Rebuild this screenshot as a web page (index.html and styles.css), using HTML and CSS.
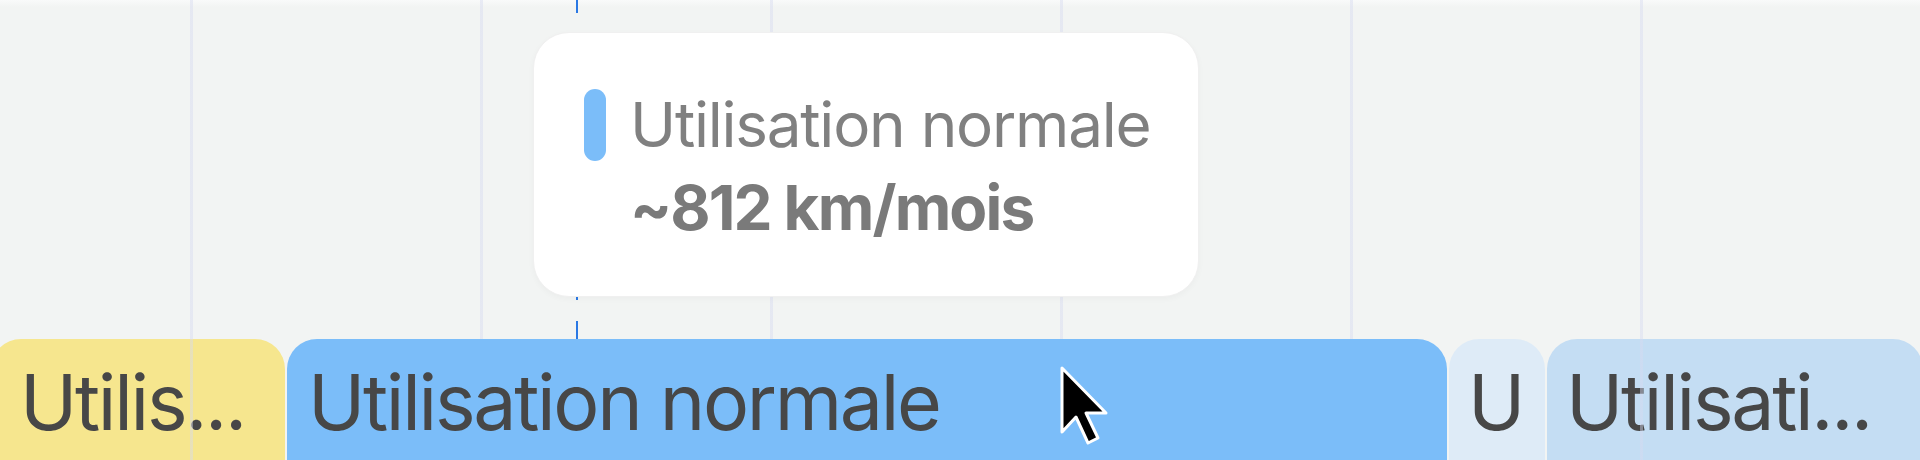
FILE: index.html
```html
<!DOCTYPE html>
<html lang="fr">
<head>
    <meta charset="UTF-8">
    <meta name="viewport" content="width=device-width, initial-scale=1.0">
    <title>Kilométrage mensuel</title>
    <link rel="stylesheet" href="styles.css">
</head>
<body>
    <div class="chart">
        <div class="crosshair"></div>

        <div class="lanes">
            <div class="bar bar-high" style="width: 294px" title="Utilisation élevée">Utilis...</div>
            <div class="bar bar-normal active" style="width: 1160px" title="Utilisation normale">Utilisation normale</div>
            <div class="bar bar-idle" style="width: 96px" title="Utilisation faible">U</div>
            <div class="bar bar-low" style="width: 376px" title="Utilisation modérée">Utilisati...</div>
        </div>

        <div class="grid"></div>

        <div class="tooltip">
            <span class="tooltip-marker"></span>
            <span class="tooltip-label">Utilisation normale</span>
            <span class="tooltip-value">~812 km/mois</span>
        </div>

        <svg class="pointer" width="52" height="82" viewBox="0 0 52 82">
            <path d="M3 3 L3 67 L17 52 L29 78 L39 73 L27 48 L47 48 Z" fill="#000" stroke="#fff" stroke-width="3" stroke-linejoin="round"/>
        </svg>
    </div>
</body>
</html>
```

FILE: styles.css
```css
* {
    margin: 0;
    padding: 0;
    box-sizing: border-box;
}

body {
    background-color: #f2f4f3;
    font-family: Inter, "Noto Sans", sans-serif;
    overflow: hidden;
}

.chart {
    position: relative;
    height: 460px;
    display: flex;
    flex-direction: column;
    overflow: hidden;
    background: linear-gradient(to bottom, #f9fafa 0, #f2f4f3 7px);
}

/* vertical month lines, drawn over the resting bars */
.grid {
    position: absolute;
    inset: 0;
    z-index: 2;
    pointer-events: none;
    background: repeating-linear-gradient(to right,
        transparent 0 190px,
        rgba(214, 218, 240, 0.45) 190px 193px,
        transparent 193px 290px);
}

.crosshair {
    position: absolute;
    top: 0;
    bottom: 0;
    left: 576px;
    width: 2px;
    z-index: 0;
    background: repeating-linear-gradient(to bottom, #2a78e4 0 20px, transparent 20px 41px);
    background-position: 0 -7px;
}

.lanes {
    margin-top: auto;
    margin-left: -9px;
    height: 121px;
    display: flex;
    gap: 2px;
}

.bar {
    position: relative;
    z-index: 1;
    flex-shrink: 0;
    height: 122px;
    padding-left: 19px;
    border-radius: 30px 30px 0 0;
    font-size: 77px;
    letter-spacing: -0.03em;
    line-height: 126px;
    color: #474747;
    white-space: nowrap;
    overflow: hidden;
}

.bar.active {
    z-index: 3;
}

.bar-high {
    background-color: #f6e68e;
    padding-left: 29px;
}

.bar-normal {
    background-color: #7bbdf9;
    padding-left: 21px;
}

.bar-idle {
    background-color: #deebf7;
}

.bar-low {
    background-color: #c4ddf3;
}

.tooltip {
    position: absolute;
    left: 533px;
    top: 32px;
    z-index: 4;
    display: grid;
    grid-template-columns: 22px auto;
    column-gap: 24px;
    align-items: center;
    padding: 50px 48px 47px 50px;
    background-color: white;
    border: 1px solid #f0f0f0;
    border-radius: 36px;
    box-shadow: 0 2px 6px rgba(0, 0, 0, 0.03);
    font-size: 62px;
    letter-spacing: -0.02em;
    line-height: 83px;
    color: #808080;
}

.tooltip-marker {
    width: 22px;
    height: 72px;
    border-radius: 11px;
    background-color: #7bbdf9;
}

.tooltip-value {
    grid-column: 2;
    font-weight: 700;
    letter-spacing: -0.03em;
    color: #7a7a7a;
}

.pointer {
    position: absolute;
    left: 1059px;
    top: 365px;
    z-index: 5;
}
```
